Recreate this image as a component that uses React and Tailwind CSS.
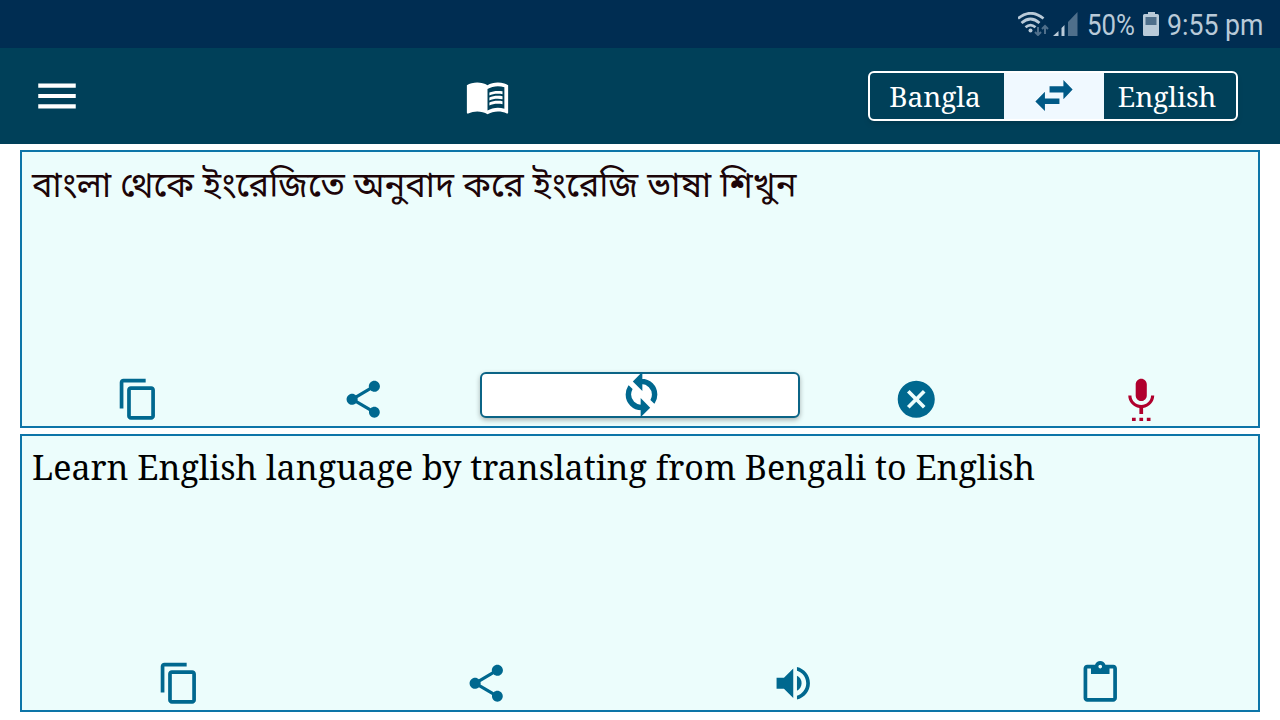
import React from "react";
import {
  MdCancel,
  MdContentCopy,
  MdContentPaste,
  MdMenu,
  MdMenuBook,
  MdSettingsVoice,
  MdShare,
  MdVolumeUp,
} from "react-icons/md";

const SERIF = "font-['Noto_Serif','DejaVu_Serif_Condensed','DejaVu_Serif',serif]";

function WifiIcon() {
  return (
    <svg className="w-8 h-6" viewBox="0 0 32 24" fill="none">
      <path d="M0 6.500Q12.500 -4 25.500 6.500" stroke="#b9cad8" strokeWidth="2.700" />
      <path d="M3.500 11Q12.500 3 21.500 11" stroke="#b9cad8" strokeWidth="2.700" />
      <path d="M7.500 15.300Q12.500 11 17.500 15.300" stroke="#b9cad8" strokeWidth="2.700" />
      <circle cx="12.500" cy="18.500" r="2" fill="#b9cad8" />
      <path d="M20 15v8m-3-3 3 3 3-3M27 22v-8m-3 3 3-3 3 3" stroke="#4f6f8b" strokeWidth="2" />
    </svg>
  );
}

function SignalIcon() {
  return (
    <svg className="w-[25px] h-6" viewBox="0 0 25 24">
      <path d="M0 24 5.500 19v5zM8.500 16l3-3v11h-3z" fill="#b9cad8" />
      <path d="M15 10 24.500 0v24H15z" fill="#4f6f8b" />
    </svg>
  );
}

function BatteryIcon() {
  return (
    <svg className="w-4 h-6" viewBox="0 0 16 24">
      <path d="M5 0h7v2h2.500q1.500 0 1.500 1.500v19q0 1.500-1.500 1.500h-13Q0 24 0 22.500v-19Q0 2 1.500 2H5z" fill="#b9cad8" />
      <path d="M2.500 5h11v8h-11z" fill="#4f6f8b" />
    </svg>
  );
}

function SwapIcon() {
  return (
    <svg className="w-[38px] h-[31px] mb-0.5" viewBox="0 0 113 94" fill="#005a87">
      <path d="M43 19h42V0l28 29-28 29V38H43zM29 36v20h44v17H29v21L0 65z" />
    </svg>
  );
}

function SyncIcon() {
  return (
    <svg className="size-[45px] ml-[3px] mb-px shrink-0" viewBox="0 0 24 24" fill="currentColor" stroke="currentColor" strokeWidth="0.900">
      <path d="M12 4V1L8 5l4 4V6c3.310 0 6 2.690 6 6 0 1.010-.250 1.970-.700 2.800l1.460 1.460C19.540 15.030 20 13.570 20 12c0-4.420-3.580-8-8-8z" />
      <path d="M12 18c-3.310 0-6-2.690-6-6 0-1.010.250-1.970.700-2.800L5.240 7.740C4.460 8.970 4 10.430 4 12c0 4.420 3.580 8 8 8v3l4-4-4-4v3z" />
    </svg>
  );
}

function StatusBar() {
  return (
    <div className="h-12 bg-[#002d52] flex items-center justify-end pr-4 text-[#b9cad8]">
      <WifiIcon />
      <div className="ml-[3px] mr-[9px]">
        <SignalIcon />
      </div>
      <span className="w-[49px] text-[30px] leading-none whitespace-nowrap">
        <span className="inline-block origin-left scale-x-[0.86] font-['Roboto',sans-serif]">50%</span>
      </span>
      <div className="ml-[7px] mr-2">
        <BatteryIcon />
      </div>
      <span className="w-[97px] text-[30px] leading-none whitespace-nowrap">
        <span className="inline-block origin-left scale-x-[0.89] font-['Roboto',sans-serif]">9:55 pm</span>
      </span>
    </div>
  );
}

function Header() {
  return (
    <header className="h-24 bg-[#004059] flex items-center justify-between pl-8 pr-[42px] text-white">
      <MdMenu className="size-[50px]" />
      <MdMenuBook className="size-[45px] ml-6" />
      <div className={`w-[370px] h-[50px] flex rounded-md border-2 border-white overflow-hidden text-[28px] shadow-md ${SERIF}`}>
        <button className="w-[134px] flex items-center justify-center pr-1">Bangla</button>
        <button className="w-[100px] bg-[#f0f9ff] flex items-center justify-center">
          <SwapIcon />
        </button>
        <button className="flex-1 flex items-center justify-center pr-1.5">English</button>
      </div>
    </header>
  );
}

function IconButton({ icon: Icon, className = "text-[#00688f]" }) {
  return (
    <button className={`flex-1 flex items-center justify-center pr-px ${className}`}>
      <Icon className="size-[44.5px]" />
    </button>
  );
}

export default function App() {
  return (
    <div className="w-[1280px] h-[720px] bg-white flex flex-col overflow-hidden">
      <StatusBar />
      <Header />
      <main className="flex-1 flex flex-col gap-1.5 px-5 pt-1.5 pb-2">
        <section className="h-[278px] flex flex-col justify-between border-2 border-[#0d75a8] bg-[#ecfdfc]">
          <p className="pl-2.5 pt-3 text-[34.48px] leading-[48px] whitespace-nowrap text-[#1c0508] font-['Noto_Sans_Bengali','Noto_Sans',sans-serif]">
            বাংলা থেকে ইংরেজিতে অনুবাদ করে ইংরেজি ভাষা শিখুন
          </p>
          <div className="flex items-center px-1">
            <IconButton icon={MdContentCopy} />
            <IconButton icon={MdShare} />
            <button className="w-[320px] h-[46px] mx-1 mb-2 flex items-center justify-center rounded-md border-2 border-[#0b6486] bg-white text-[#00688f] shadow-[0_2px_5px_rgba(0,0,0,0.3)]">
              <SyncIcon />
            </button>
            <IconButton icon={MdCancel} />
            <IconButton icon={MdSettingsVoice} className="text-[#b0002d]" />
          </div>
        </section>
        <section className="h-[278px] flex flex-col justify-between border-2 border-[#0d75a8] bg-[#ecfdfc]">
          <p className={`pl-2.5 pt-[7px] text-[34.03px] leading-[48px] whitespace-nowrap text-black ${SERIF}`}>
            Learn English language by translating from Bengali to English
          </p>
          <div className="flex items-center px-1 pb-[5px]">
            <IconButton icon={MdContentCopy} />
            <IconButton icon={MdShare} />
            <IconButton icon={MdVolumeUp} />
            <IconButton icon={MdContentPaste} />
          </div>
        </section>
      </main>
    </div>
  );
}
